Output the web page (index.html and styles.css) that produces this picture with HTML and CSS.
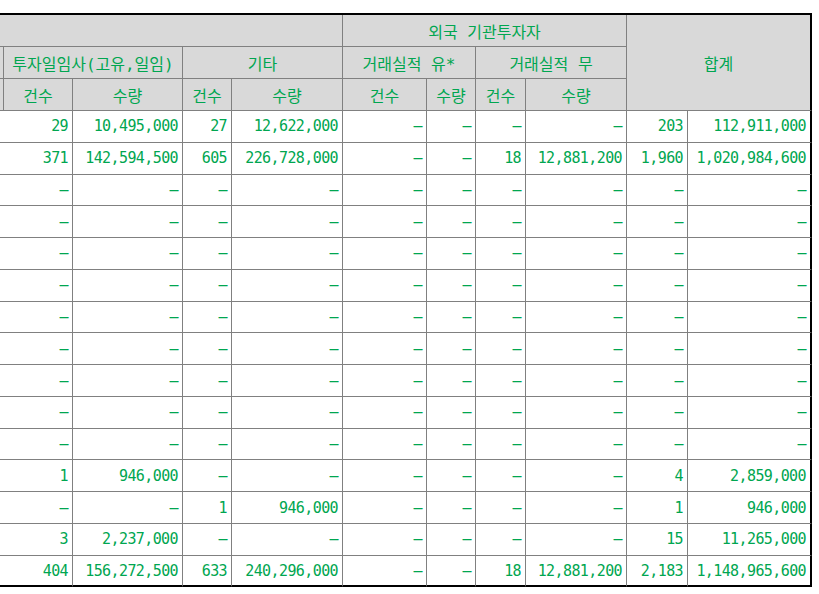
FILE: index.html
```html
<!DOCTYPE html>
<html lang="ko">
<head>
<meta charset="utf-8">
<title>외국 기관투자자</title>
<link rel="stylesheet" href="styles.css">
</head>
<body>
<div class="sheet">
  <div class="h span5"></div>
  <div class="h span4">외국 기관투자자</div>
  <div class="h span2 rows3 last">합계</div>

  <div class="h"></div>
  <div class="h span2">투자일임사(고유,일임)</div>
  <div class="h span2">기타</div>
  <div class="h span2">거래실적 유*</div>
  <div class="h span2">거래실적 무</div>

  <div class="h"></div>
  <div class="h">건수</div><div class="h">수량</div>
  <div class="h">건수</div><div class="h">수량</div>
  <div class="h">건수</div><div class="h">수량</div>
  <div class="h">건수</div><div class="h">수량</div>

  <div class="c"></div><div class="c">29</div><div class="c">10,495,000</div><div class="c">27</div><div class="c">12,622,000</div><div class="c">–</div><div class="c">–</div><div class="c">–</div><div class="c">–</div><div class="c">203</div><div class="c last">112,911,000</div>
  <div class="c"></div><div class="c">371</div><div class="c">142,594,500</div><div class="c">605</div><div class="c">226,728,000</div><div class="c">–</div><div class="c">–</div><div class="c">18</div><div class="c">12,881,200</div><div class="c">1,960</div><div class="c last">1,020,984,600</div>
  <div class="c"></div><div class="c">–</div><div class="c">–</div><div class="c">–</div><div class="c">–</div><div class="c">–</div><div class="c">–</div><div class="c">–</div><div class="c">–</div><div class="c">–</div><div class="c last">–</div>
  <div class="c"></div><div class="c">–</div><div class="c">–</div><div class="c">–</div><div class="c">–</div><div class="c">–</div><div class="c">–</div><div class="c">–</div><div class="c">–</div><div class="c">–</div><div class="c last">–</div>
  <div class="c"></div><div class="c">–</div><div class="c">–</div><div class="c">–</div><div class="c">–</div><div class="c">–</div><div class="c">–</div><div class="c">–</div><div class="c">–</div><div class="c">–</div><div class="c last">–</div>
  <div class="c"></div><div class="c">–</div><div class="c">–</div><div class="c">–</div><div class="c">–</div><div class="c">–</div><div class="c">–</div><div class="c">–</div><div class="c">–</div><div class="c">–</div><div class="c last">–</div>
  <div class="c"></div><div class="c">–</div><div class="c">–</div><div class="c">–</div><div class="c">–</div><div class="c">–</div><div class="c">–</div><div class="c">–</div><div class="c">–</div><div class="c">–</div><div class="c last">–</div>
  <div class="c"></div><div class="c">–</div><div class="c">–</div><div class="c">–</div><div class="c">–</div><div class="c">–</div><div class="c">–</div><div class="c">–</div><div class="c">–</div><div class="c">–</div><div class="c last">–</div>
  <div class="c"></div><div class="c">–</div><div class="c">–</div><div class="c">–</div><div class="c">–</div><div class="c">–</div><div class="c">–</div><div class="c">–</div><div class="c">–</div><div class="c">–</div><div class="c last">–</div>
  <div class="c"></div><div class="c">–</div><div class="c">–</div><div class="c">–</div><div class="c">–</div><div class="c">–</div><div class="c">–</div><div class="c">–</div><div class="c">–</div><div class="c">–</div><div class="c last">–</div>
  <div class="c"></div><div class="c">–</div><div class="c">–</div><div class="c">–</div><div class="c">–</div><div class="c">–</div><div class="c">–</div><div class="c">–</div><div class="c">–</div><div class="c">–</div><div class="c last">–</div>
  <div class="c"></div><div class="c">1</div><div class="c">946,000</div><div class="c">–</div><div class="c">–</div><div class="c">–</div><div class="c">–</div><div class="c">–</div><div class="c">–</div><div class="c">4</div><div class="c last">2,859,000</div>
  <div class="c"></div><div class="c">–</div><div class="c">–</div><div class="c">1</div><div class="c">946,000</div><div class="c">–</div><div class="c">–</div><div class="c">–</div><div class="c">–</div><div class="c">1</div><div class="c last">946,000</div>
  <div class="c"></div><div class="c">3</div><div class="c">2,237,000</div><div class="c">–</div><div class="c">–</div><div class="c">–</div><div class="c">–</div><div class="c">–</div><div class="c">–</div><div class="c">15</div><div class="c last">11,265,000</div>
  <div class="c end"></div><div class="c end">404</div><div class="c end">156,272,500</div><div class="c end">633</div><div class="c end">240,296,000</div><div class="c end">–</div><div class="c end">–</div><div class="c end">18</div><div class="c end">12,881,200</div><div class="c end">2,183</div><div class="c end last">1,148,965,600</div>
</div>
</body>
</html>
```
FILE: styles.css
```css
html, body {
  margin: 0;
  padding: 0;
  background: #ffffff;
}

.sheet {
  margin-top: 13px;
  width: 812px;
  border-top: 2px solid #000000;
  display: grid;
  grid-template-columns: 4px 69px 110px 49px 111px 84px 49px 50px 101px 61px 124px;
  grid-template-rows: repeat(3, 32px) repeat(15, 31.77px);
  font-family: "DejaVu Sans Mono", "Noto Sans CJK KR", monospace;
  font-size: 15px;
  color: #00a650;
}

.h, .c {
  box-sizing: border-box;
  display: flex;
  align-items: center;
  border-right: 1px solid #808080;
  border-bottom: 1px solid #808080;
  white-space: nowrap;
  overflow: hidden;
}

.h {
  background: #d9d9d9;
  justify-content: center;
  font-size: 16px;
  letter-spacing: 0;
}

.c {
  background: #ffffff;
  justify-content: flex-end;
  padding-right: 4px;
  letter-spacing: -0.6px;
}

.span2 { grid-column: span 2; }
.span4 { grid-column: span 4; }
.span5 { grid-column: span 5; }
.rows3 { grid-row: span 3; }

.last { border-right: 2px solid #000000; }
.end { border-bottom: 2px solid #000000; }
```
